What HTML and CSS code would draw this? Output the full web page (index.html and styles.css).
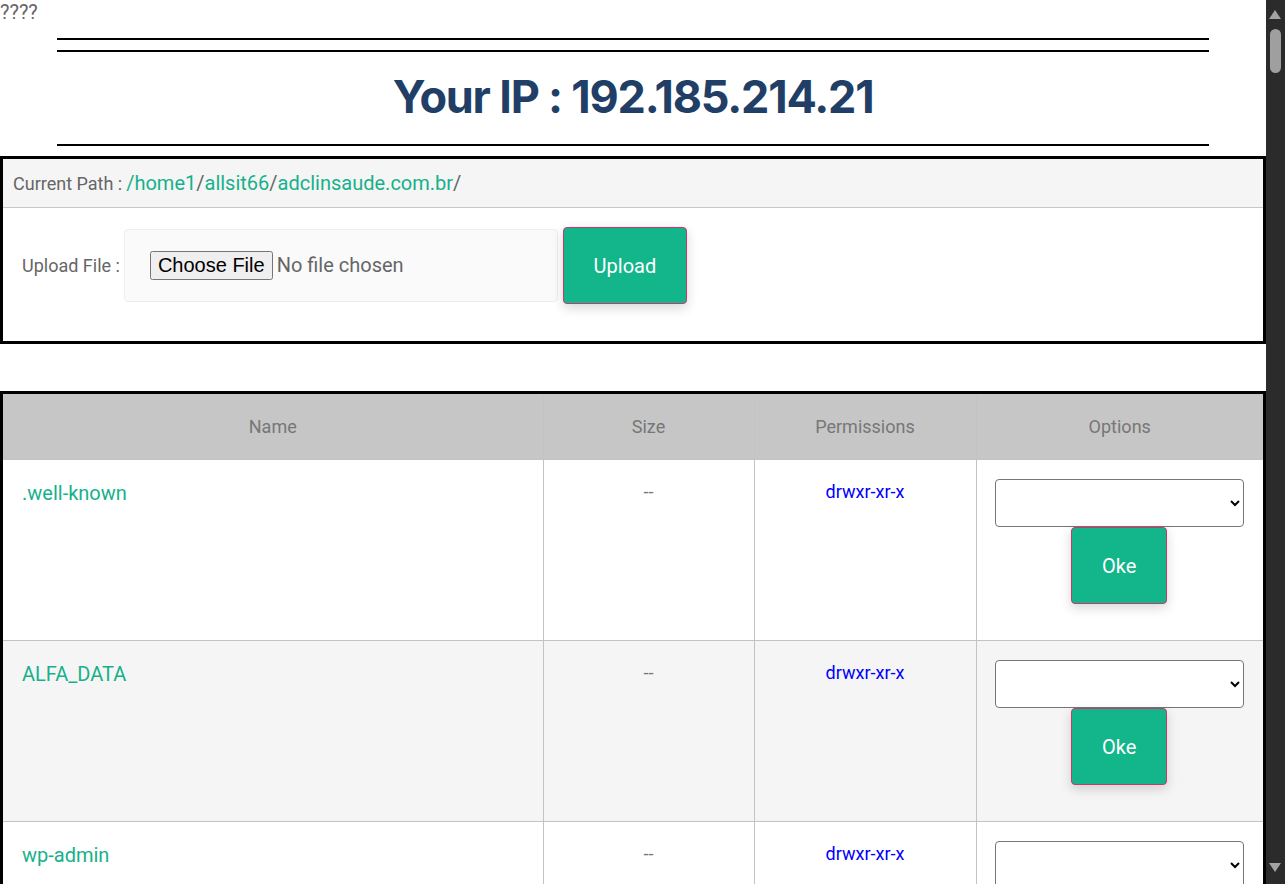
FILE: index.html
```html
<!DOCTYPE html>
<html lang="en">
<head>
<meta charset="utf-8">
<title>File Manager</title>
<link rel="stylesheet" href="styles.css">
</head>
<body>
<div class="marks">????</div>
<header class="ip-head">
  <div class="rule"></div>
  <div class="rule rule-2"></div>
  <h1 class="ip-title">Your IP : 192.185.214.21</h1>
  <div class="rule"></div>
</header>

<section class="panel">
  <div class="panel-path">
    <span class="path-label">Current Path :</span>
    <a class="path-link" href="#">/home1</a><span class="sep">/</span><a class="path-link" href="#">allsit66</a><span class="sep">/</span><a class="path-link" href="#">adclinsaude.com.br</a><span class="sep">/</span>
  </div>
  <form class="upload-row">
    <label class="upload-label">Upload File :</label>
    <div class="file-box"><input class="file-input" type="file"></div>
    <button class="btn btn-upload" type="button">Upload</button>
  </form>
</section>

<section class="files">
  <table class="file-table">
    <colgroup>
      <col class="c-name"><col class="c-size"><col class="c-perm"><col class="c-opt">
    </colgroup>
    <thead>
      <tr><th>Name</th><th>Size</th><th>Permissions</th><th>Options</th></tr>
    </thead>
    <tbody>
      <tr>
        <td class="name"><a href="#">.well-known</a></td>
        <td class="size">--</td>
        <td class="perm">drwxr-xr-x</td>
        <td class="opt"><select class="opt-select"><option></option></select><button class="btn btn-oke" type="button">Oke</button></td>
      </tr>
      <tr class="alt">
        <td class="name"><a href="#">ALFA_DATA</a></td>
        <td class="size">--</td>
        <td class="perm">drwxr-xr-x</td>
        <td class="opt"><select class="opt-select"><option></option></select><button class="btn btn-oke" type="button">Oke</button></td>
      </tr>
      <tr>
        <td class="name"><a href="#">wp-admin</a></td>
        <td class="size">--</td>
        <td class="perm">drwxr-xr-x</td>
        <td class="opt"><select class="opt-select"><option></option></select><button class="btn btn-oke" type="button">Oke</button></td>
      </tr>
    </tbody>
  </table>
</section>

<div class="fake-scrollbar" aria-hidden="true">
  <span class="sb-arrow sb-up"></span>
  <span class="sb-thumb"></span>
  <span class="sb-arrow sb-down"></span>
</div>
</body>
</html>
```

FILE: styles.css
```css
body {
  margin: 0 19px 0 0;
  background: #fff;
  font-family: Roboto, "Liberation Sans", Arial, sans-serif;
  color: #666;
}
.marks {
  font-size: 20px;
  line-height: 24px;
  height: 19px;
  color: #666;
}
.ip-head {
  margin: 19px 57px 0 57px;
}
.rule {
  border-top: 2px solid #000;
}
.rule-2 {
  margin-top: 10px;
}
.ip-title {
  margin: 0;
  height: 92px;
  line-height: 90px;
  text-align: center;
  font-family: Inter, "DejaVu Sans", sans-serif;
  font-weight: 700;
  font-size: 45px;
  letter-spacing: -1.2px;
  color: #213f66;
}
.panel {
  margin: 10px 0 0 0;
  border: 3px solid #000;
}
.panel-path {
  background: #f5f5f5;
  border-bottom: 1px solid #c8c8c8;
  height: 48px;
  display: flex;
  align-items: center;
  padding-left: 10px;
}
.path-label {
  margin-right: 4px;
  color: #666;
  font-size: 18px;
}
.path-link {
  color: #16b18b;
  text-decoration: none;
  font-size: 20px;
}
.sep {
  color: #666;
  font-size: 20px;
}
.upload-row {
  display: flex;
  align-items: center;
  padding: 19px 20px 37px 19px;
  margin: 0;
}
.upload-label {
  font-size: 18px;
  color: #666;
  margin-right: 4px;
}
.file-box {
  width: 434px;
  height: 73px;
  box-sizing: border-box;
  background: #fafafa;
  border: 1px solid #eee;
  border-radius: 4px;
  display: flex;
  align-items: center;
  padding-left: 25px;
}
.file-input {
  font-family: Roboto, "Liberation Sans", sans-serif;
  font-size: 20px;
  color: #666;
}
.btn {
  background: #13b58b;
  color: #fff;
  border: 1px solid #c8386b;
  border-radius: 4px;
  font-family: Roboto, "Liberation Sans", sans-serif;
  font-size: 20px;
  box-shadow: 0 4px 12px rgba(0, 0, 0, 0.16);
  cursor: pointer;
}
.btn-upload {
  width: 124px;
  height: 77px;
  margin-left: 5px;
}
.files {
  margin: 47px 0 0 0;
  border: 3px solid #000;
}
.file-table {
  width: 100%;
  border-collapse: collapse;
  border-style: hidden;
  table-layout: fixed;
}
.c-name { width: 540px; }
.c-size { width: 211px; }
.c-perm { width: 222px; }
.c-opt { width: 287px; }
.file-table th,
.file-table td {
  border: 1px solid #c3c3c3;
}
.file-table th {
  background: #c6c6c6;
  height: 65px;
  padding: 0;
  line-height: 62px;
  font-weight: 400;
  font-size: 18px;
  color: #777;
}
.file-table td {
  vertical-align: top;
  padding: 21px 20px 0;
}
.file-table tr.alt td {
  background: #f5f5f5;
}
.file-table td.name {
  font-size: 20px;
  padding-left: 19px;
}
.name a {
  color: #16b18b;
  text-decoration: none;
}
.size {
  text-align: center;
  color: #777;
  font-size: 18px;
}
.perm {
  text-align: center;
  color: #0000ff;
  font-size: 18px;
}
.file-table td.opt {
  padding: 19px 19px 36px 18px;
  text-align: center;
}
.opt-select {
  display: block;
  width: 100%;
  height: 48px;
  border: 1px solid #767676;
  border-radius: 4px;
  background: #fff;
}
.btn-oke {
  width: 96px;
  height: 77px;
}

/* simulated browser scrollbar */
.fake-scrollbar {
  position: fixed;
  top: 0;
  right: 0;
  width: 19px;
  height: 100vh;
  background: #2b2b2b;
}
.sb-arrow {
  position: absolute;
  left: 3px;
  width: 0;
  height: 0;
  border-left: 6px solid transparent;
  border-right: 6px solid transparent;
}
.sb-up {
  top: 10px;
  border-bottom: 9px solid #a3a3a3;
}
.sb-down {
  bottom: 12px;
  border-top: 9px solid #a3a3a3;
}
.sb-thumb {
  position: absolute;
  top: 29px;
  left: 4px;
  width: 11px;
  height: 44px;
  border-radius: 6px;
  background: #9f9f9f;
}
```
